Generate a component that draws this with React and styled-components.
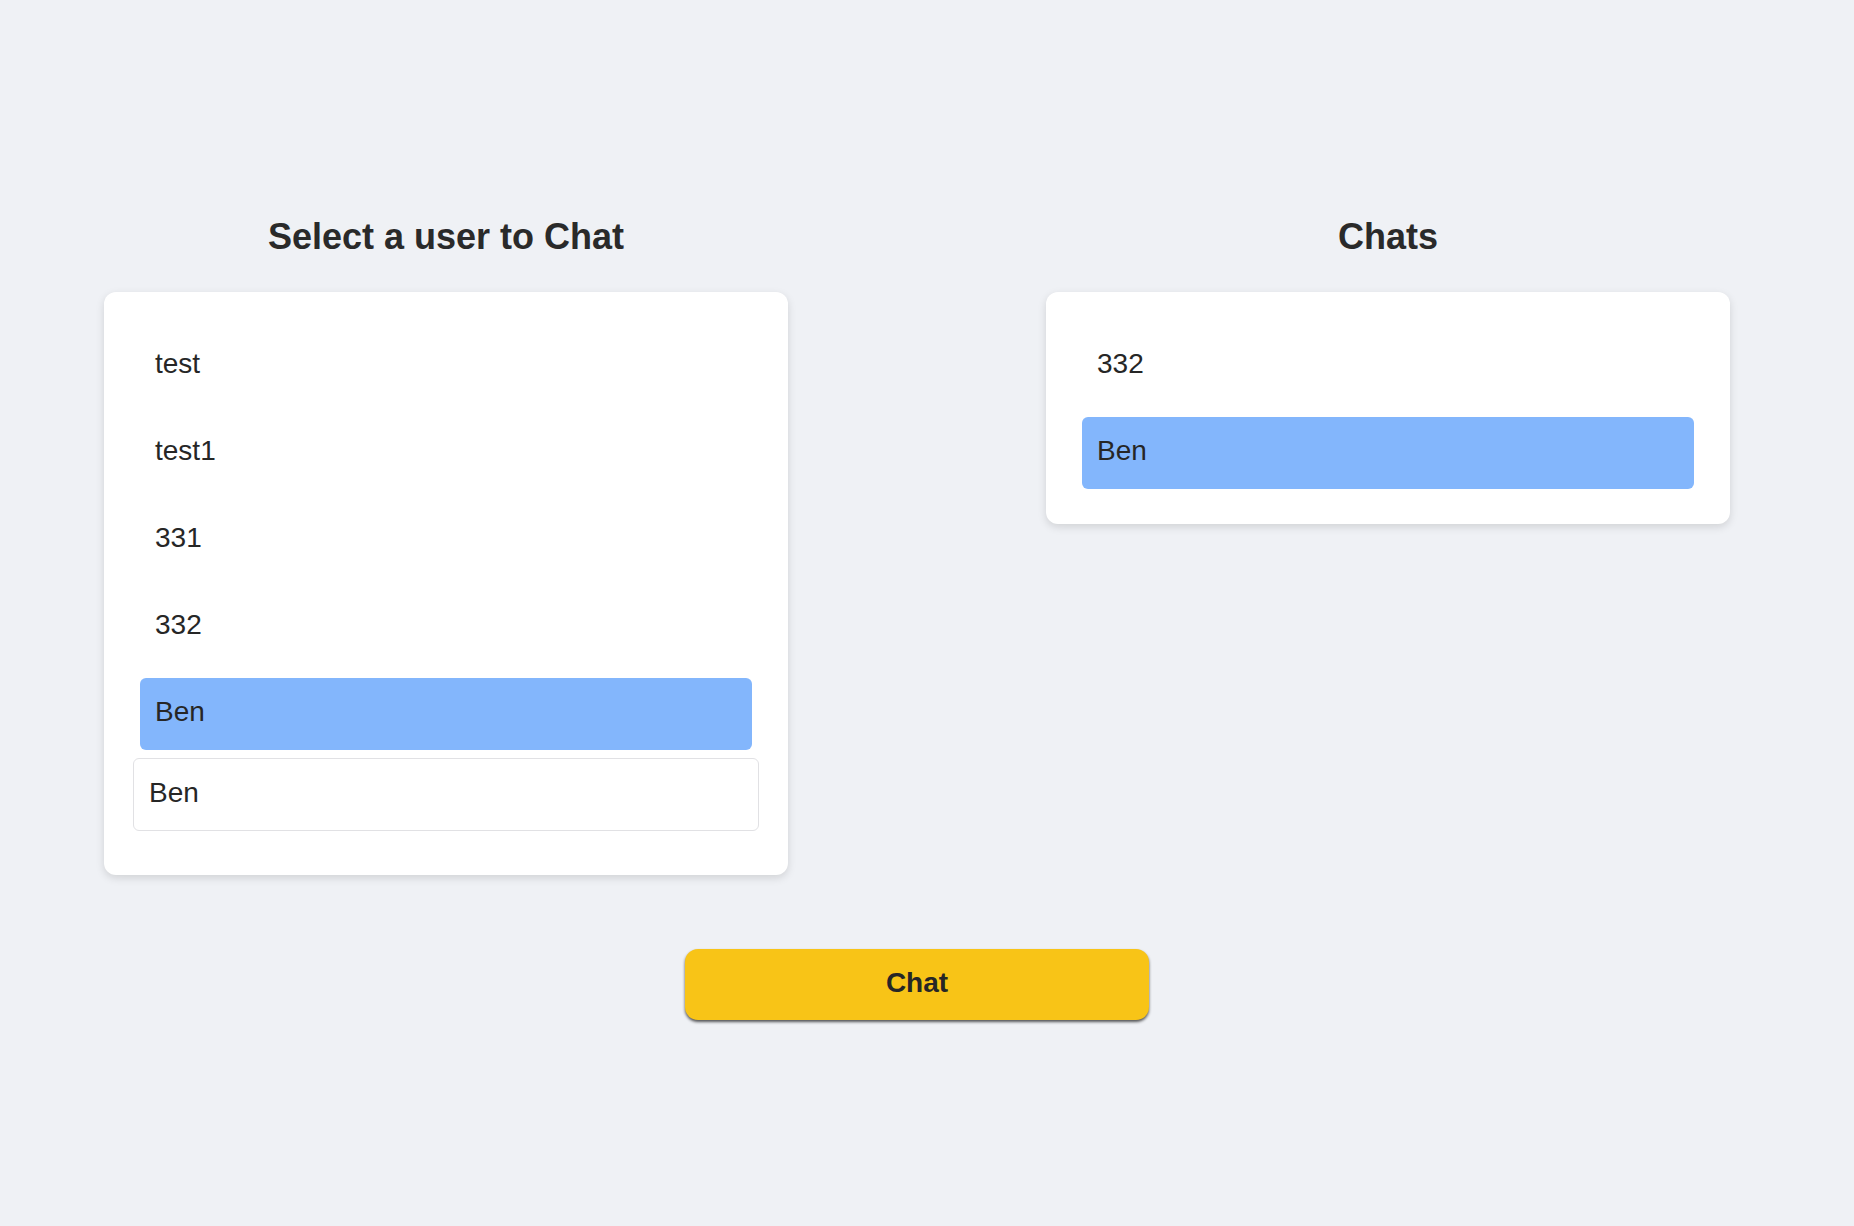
import React, { useState } from 'react';
import styled, { createGlobalStyle } from 'styled-components';

const users = ['test', 'test1', '331', '332', 'Ben'];
const chats = ['332', 'Ben'];

export default function App() {
    const [selected, setSelected] = useState('Ben');
    const [activeChat, setActiveChat] = useState('Ben');
    const [name, setName] = useState('Ben');

    return (
        <Page>
            <GlobalStyle />
            <Columns>
                <Column>
                    <Title>Select a user to Chat</Title>
                    <Card $bottom={44}>
                        {users.map((user) => (
                            <Item
                                key={user}
                                $active={user === selected}
                                onClick={() => setSelected(user)}
                            >
                                {user}
                            </Item>
                        ))}
                        <NameInput value={name} onChange={(e) => setName(e.target.value)} />
                    </Card>
                </Column>
                <Column>
                    <Title>Chats</Title>
                    <Card $bottom={35}>
                        {chats.map((chat) => (
                            <Item
                                key={chat}
                                $active={chat === activeChat}
                                onClick={() => setActiveChat(chat)}
                            >
                                {chat}
                            </Item>
                        ))}
                    </Card>
                </Column>
            </Columns>
            <Footer>
                <ChatButton>Chat</ChatButton>
            </Footer>
        </Page>
    );
}

const GlobalStyle = createGlobalStyle`
    html, body {
        margin: 0;
        padding: 0;
        background: #eff1f5;
    }
    body {
        font-family: "Liberation Sans", Arial, Helvetica, sans-serif;
        color: #262626;
        min-height: 1226px;
    }
    * {
        box-sizing: border-box;
    }
`;

const Page = styled.div`
    padding: 213px 124px 0 104px;
`;

const Columns = styled.div`
    display: grid;
    grid-template-columns: 684px 684px;
    justify-content: space-between;
    align-items: start;
`;

const Column = styled.div`
    display: flex;
    flex-direction: column;
`;

const Title = styled.h2`
    margin: 3px 0 35px;
    font-size: 36px;
    line-height: 41px;
    font-weight: 700;
    text-align: center;
    color: #2a2a2a;
`;

const Card = styled.div`
    display: flex;
    flex-direction: column;
    gap: 15px;
    background: #ffffff;
    border-radius: 12px;
    padding: 38px 29px ${(p) => p.$bottom}px;
    box-shadow: 0 3px 9px rgba(0, 0, 0, 0.13);
`;

const Item = styled.div`
    height: 72px;
    margin: 0 7px;
    padding: 0 15px 4px;
    display: flex;
    align-items: center;
    font-size: 28px;
    color: #262626;
    border-radius: 6px;
    background: ${(p) => (p.$active ? '#83b6fc' : 'transparent')};
    cursor: pointer;
`;

const NameInput = styled.input`
    margin-top: -7px;
    height: 73px;
    width: 100%;
    padding: 0 15px 3px;
    border: 1px solid #e1e1e4;
    border-radius: 6px;
    font-family: "Liberation Sans", Arial, sans-serif;
    font-size: 28px;
    color: #262626;
    background: #fff;
    outline: none;
`;

const Footer = styled.div`
    display: flex;
    justify-content: center;
    padding-top: 74px;
`;

const ChatButton = styled.button`
    width: 464px;
    height: 71px;
    padding: 0 0 3px;
    border: none;
    border-radius: 13px;
    background: #f8c417;
    font-family: "Liberation Sans", Arial, sans-serif;
    font-size: 28px;
    font-weight: 700;
    color: #262626;
    box-shadow: 0 2px 3px rgba(0, 0, 0, 0.65);
    cursor: pointer;
`;
